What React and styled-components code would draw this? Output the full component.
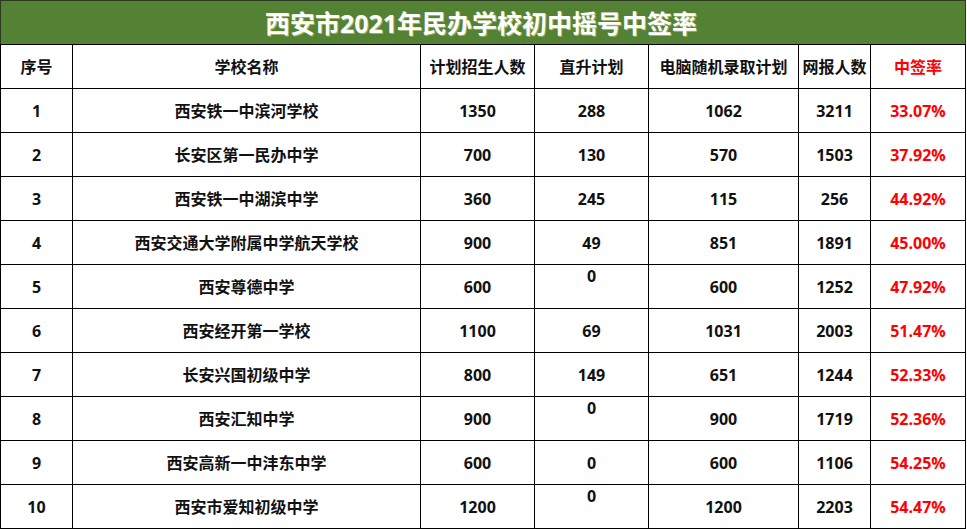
import React from "react";
import styled, { createGlobalStyle } from "styled-components";

const Global = createGlobalStyle`
  html, body { margin: 0; padding: 0; background: #fff; }
  body { font-family: "Open Sans", "Noto Sans CJK SC", sans-serif; }
`;

const Wrap = styled.div`
  width: 966px;
`;

const Title = styled.div`
  box-sizing: border-box;
  height: 44px;
  background: #548235;
  border: 1px solid #2d3a22;
  border-bottom: none;
  display: flex;
  align-items: center;
  justify-content: center;
  color: #fff;
  font-size: 25px;
  line-height: 30px;
  font-weight: 700;
  text-shadow: 1px 1px 0 rgba(230, 220, 140, 0.55);
  padding-right: 4px;
`;

const cols = "72px 348px 114px 114px 150px 72px 95px";

const Row = styled.div`
  box-sizing: border-box;
  display: grid;
  grid-template-columns: ${cols};
  grid-template-rows: 100%;
  height: ${(p) => (p.$head ? 45 : 44)}px;
  border-left: 1px solid #000;
  border-top: ${(p) => (p.$head ? "1px solid #000" : "none")};
  overflow: hidden;
`;

const Cell = styled.div`
  box-sizing: border-box;
  min-height: 0;
  border-right: 1px solid #000;
  border-bottom: 1px solid #000;
  display: flex;
  align-items: center;
  justify-content: center;
  padding-bottom: ${(p) => (p.$raised ? "21px" : "0")};
  font-size: 16px;
  line-height: 20px;
  font-weight: 700;
  color: ${(p) => (p.$red ? "#ff0000" : "#111")};
  white-space: nowrap;
`;

const data = [
  ["1", "西安铁一中滨河学校", "1350", "288", "1062", "3211", "33.07%"],
  ["2", "长安区第一民办中学", "700", "130", "570", "1503", "37.92%"],
  ["3", "西安铁一中湖滨中学", "360", "245", "115", "256", "44.92%"],
  ["4", "西安交通大学附属中学航天学校", "900", "49", "851", "1891", "45.00%"],
  ["5", "西安尊德中学", "600", "0", "600", "1252", "47.92%", true],
  ["6", "西安经开第一学校", "1100", "69", "1031", "2003", "51.47%"],
  ["7", "长安兴国初级中学", "800", "149", "651", "1244", "52.33%"],
  ["8", "西安汇知中学", "900", "0", "900", "1719", "52.36%", true],
  ["9", "西安高新一中沣东中学", "600", "0", "600", "1106", "54.25%"],
  ["10", "西安市爱知初级中学", "1200", "0", "1200", "2203", "54.47%", true],
];

export default function App() {
  return (
    <Wrap>
      <Global />
      <Title>西安市2021年民办学校初中摇号中签率</Title>
      <Row $head>
        <Cell>序号</Cell>
        <Cell>学校名称</Cell>
        <Cell>计划招生人数</Cell>
        <Cell>直升计划</Cell>
        <Cell>电脑随机录取计划</Cell>
        <Cell>网报人数</Cell>
        <Cell $red>中签率</Cell>
      </Row>
      {data.map((r) => (
        <Row key={r[0]}>
          <Cell>{r[0]}</Cell>
          <Cell>{r[1]}</Cell>
          <Cell>{r[2]}</Cell>
          <Cell $raised={r[7]}>{r[3]}</Cell>
          <Cell>{r[4]}</Cell>
          <Cell>{r[5]}</Cell>
          <Cell $red>{r[6]}</Cell>
        </Row>
      ))}
    </Wrap>
  );
}
